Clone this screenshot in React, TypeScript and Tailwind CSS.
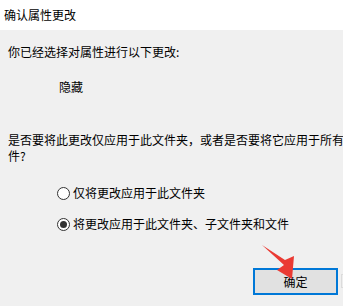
export default function App() {
  return (
    <div
      className="relative w-[343px] h-[306px] overflow-hidden bg-[#f0f0f0] text-[12px] leading-[16px] text-black"
      style={{ fontFamily: '"Microsoft YaHei", "Noto Sans CJK SC", sans-serif' }}
    >
      <div className="flex h-[30px] items-center bg-white pl-[4px]">确认属性更改</div>

      <div className="pl-[8px]">
        <p className="mt-[14px]">你已经选择对属性进行以下更改:</p>
        <p className="mt-[19px] pl-[51px]">隐藏</p>
        <p className="mt-[37px] w-[362px]">是否要将此更改仅应用于此文件夹，或者是否要将它应用于所有文件?</p>

        <div className="mt-[21px] flex flex-col gap-[15px] pl-[49px]">
          <label className="flex h-[16px] items-center gap-[3px]">
            <span className="h-[13px] w-[13px] rounded-full border border-[#333] bg-white" />
            仅将更改应用于此文件夹
          </label>
          <label className="flex h-[16px] items-center gap-[3px]">
            <span className="flex h-[13px] w-[13px] items-center justify-center rounded-full border border-[#333] bg-white">
              <span className="h-[7px] w-[7px] rounded-full bg-[#333]" />
            </span>
            将更改应用于此文件夹、子文件夹和文件
          </label>
        </div>

        <div className="mt-[36px] flex items-start gap-[3px] pl-[245px]">
          <button className="flex h-[27px] w-[85px] shrink-0 items-center justify-center border-2 border-[#0078d7] bg-[#e1e1e1] pt-[1px]">
            确定
          </button>
          <div className="mt-[6px] h-[14px] w-[20px] shrink-0 border border-[#dcdcdc] bg-[#eeeeee]" />
        </div>
      </div>

      <svg className="absolute left-0 top-0" width="343" height="306" viewBox="0 0 343 306">
        <polygon points="262,245 285,260 294,256 292,279 277,270 284,265" fill="#ea3a33" />
      </svg>
    </div>
  );
}
